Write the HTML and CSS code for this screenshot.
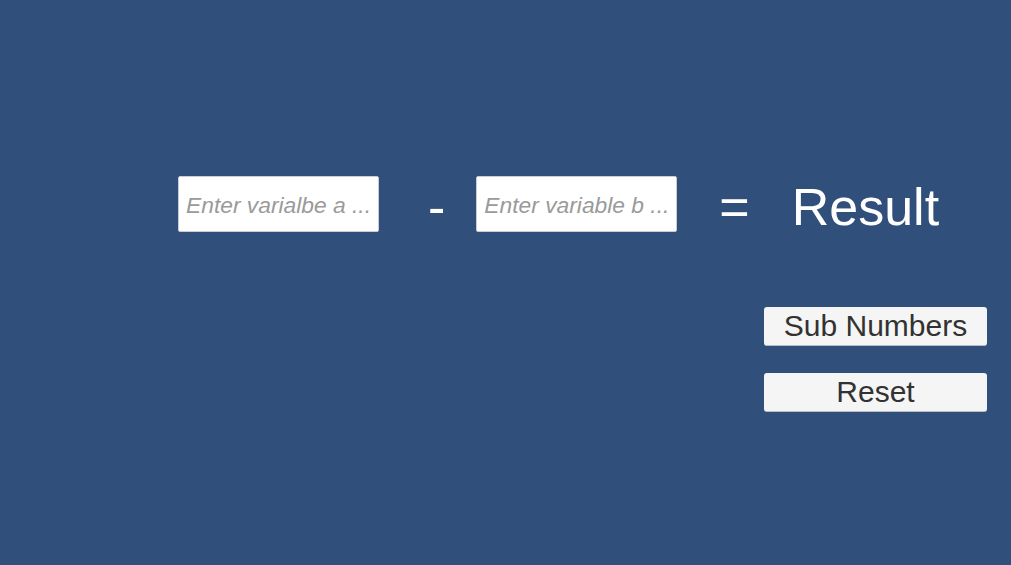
FILE: index.html
```html
<!DOCTYPE html>
<html>
<head>
<meta charset="utf-8">
<link rel="stylesheet" href="styles.css">
</head>
<body>
<div class="screen">
  <div class="equation">
    <div class="field field-a"><span class="placeholder">Enter varialbe a ...</span></div>
    <div class="op minus">-</div>
    <div class="field field-b"><span class="placeholder">Enter variable b ...</span></div>
    <div class="op equals">=</div>
    <div class="op result">Result</div>
  </div>
  <div class="actions">
    <button class="btn">Sub Numbers</button>
    <button class="btn">Reset</button>
  </div>
</div>
</body>
</html>
```

FILE: styles.css
```css
html, body {
  margin: 0;
  padding: 0;
  width: 1011px;
  height: 565px;
  overflow: hidden;
  background: #314f7b;
  font-family: "Liberation Sans", Arial, sans-serif;
}

.screen {
  display: flex;
  flex-direction: column;
  padding-top: 176px;
  box-sizing: border-box;
  height: 565px;
}

.equation {
  display: flex;
  align-items: flex-start;
  margin-left: 178px;
  height: 56px;
}

.field {
  width: 201px;
  height: 56px;
  box-sizing: border-box;
  background: #ffffff;
  border: 1px solid #c8ccd2;
  border-radius: 2px;
  display: flex;
  align-items: center;
  padding: 2px 0 0 7px;
  overflow: hidden;
}

.placeholder {
  font-style: italic;
  font-size: 22.8px;
  color: #9a9a9a;
  white-space: nowrap;
}

.op {
  color: #ffffff;
  font-size: 52px;
  line-height: 56px;
  padding-top: 3px;
}

.minus {
  margin-left: 49px;
  margin-right: 31px;
}

.equals {
  margin-left: 42px;
}

.result {
  margin-left: 42px;
}

.actions {
  display: flex;
  flex-direction: column;
  align-items: flex-start;
  gap: 27px;
  margin-left: 764px;
  margin-top: 75px;
}

.btn {
  width: 223px;
  height: 39px;
  padding: 0;
  margin: 0;
  background: #f5f5f5;
  border: none;
  border-bottom: 1px solid #b9bcc2;
  border-radius: 3px;
  color: #323232;
  font-family: "Liberation Sans", Arial, sans-serif;
  font-size: 30px;
  line-height: 38px;
  text-align: center;
}
```
